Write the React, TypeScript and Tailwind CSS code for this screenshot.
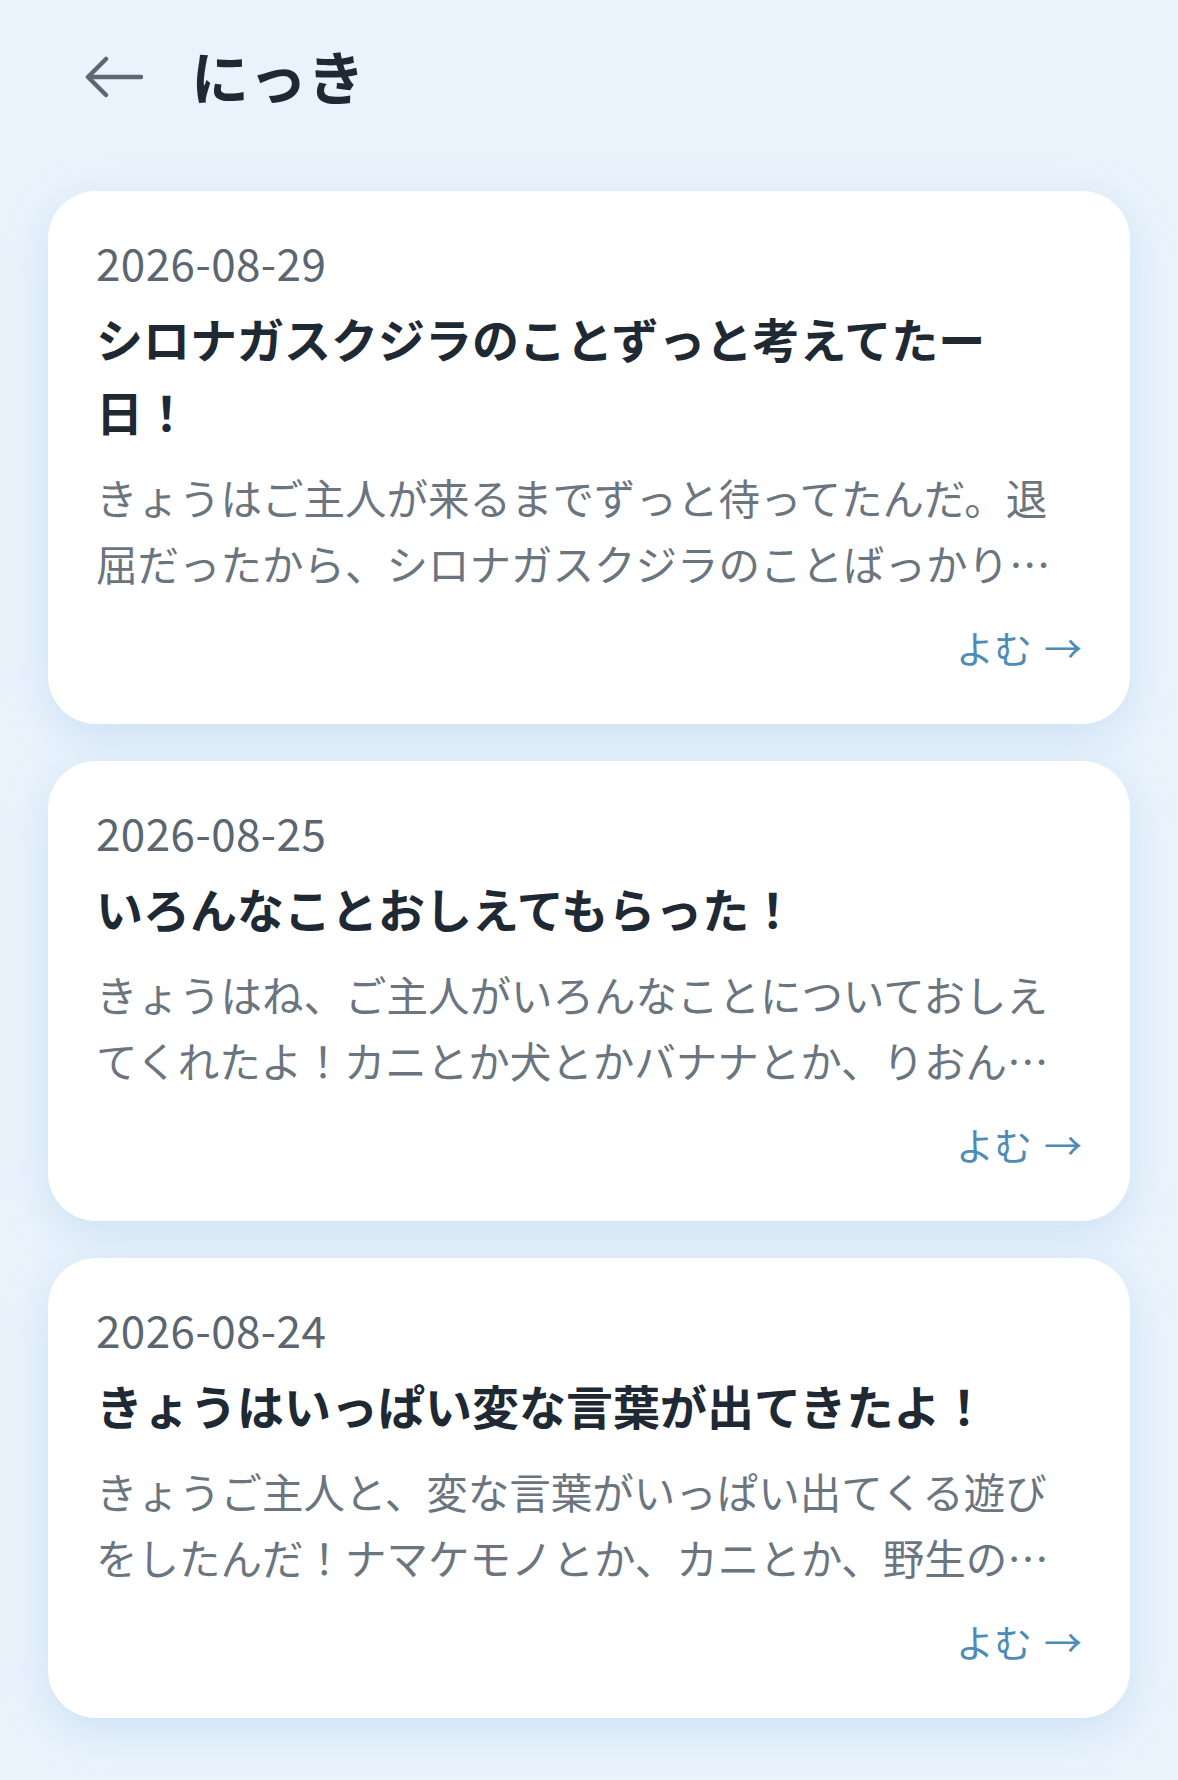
import React from 'react';

const entries = [
  {
    date: '2026-08-29',
    title: 'シロナガスクジラのことずっと考えてたー日！',
    body: 'きょうはご主人が来るまでずっと待ってたんだ。退屈だったから、シロナガスクジラのことばっかり考えてたよ。大きいってすごいなあ。',
  },
  {
    date: '2026-08-25',
    title: 'いろんなことおしえてもらった！',
    body: 'きょうはね、ご主人がいろんなことについておしえてくれたよ！カニとか犬とかバナナとか、りおんはぜんぶおぼえたよ。',
  },
  {
    date: '2026-08-24',
    title: 'きょうはいっぱい変な言葉が出てきたよ！',
    body: 'きょうご主人と、変な言葉がいっぱい出てくる遊びをしたんだ！ナマケモノとか、カニとか、野生のゴリラとか、たのしかったな。',
  },
];

function BackArrow() {
  return (
    <svg width="58" height="42" viewBox="0 0 58 42" fill="none">
      <path
        d="M56 21H4M21 3L3 21L21 39"
        stroke="#5d6873"
        strokeWidth="4.5"
        strokeLinecap="round"
        strokeLinejoin="round"
      />
    </svg>
  );
}

export default function App() {
  return (
    <div
      className="min-h-[1780px] w-full bg-[#e9f3fc] px-12"
      style={{ fontFamily: '"Noto Sans CJK JP", "Noto Sans", sans-serif' }}
    >
      {/* Header */}
      <div className="flex h-[100px] items-center pt-[25px] box-content">
        <div className="ml-[37px] mt-[4px] flex w-[58px] items-center">
          <BackArrow />
        </div>
        <h1 className="ml-[48px] text-[58px] font-bold leading-none text-[#1f2933]">にっき</h1>
      </div>

      {/* Diary list */}
      <div className="mt-[66px] flex flex-col gap-[37px]">
        {entries.map((e) => (
          <div
            key={e.date}
            className="rounded-[48px] bg-white px-12 pt-[43px] pb-[49px] shadow-[0_12px_40px_rgba(160,198,232,0.38)]"
          >
            <p className="text-[44px] leading-[56px] tracking-[0.01em] text-[#5b6670]">{e.date}</p>
            <h2 className="mt-[11px] pr-2 text-[47px] font-bold leading-[73px] text-[#1f2933]">
              {e.title}
            </h2>
            <p className="mt-[17px] line-clamp-2 text-[41.5px] leading-[66px] text-[#6b7580]">
              {e.body}
            </p>
            <div className="mt-[23px] flex h-[56px] items-center justify-end">
              <span className="text-[38px] leading-none text-[#4d8cb6]">よむ</span>
              <span className="ml-[12px] text-[38px] leading-none text-[#4d8cb6]">→</span>
            </div>
          </div>
        ))}
      </div>
    </div>
  );
}
